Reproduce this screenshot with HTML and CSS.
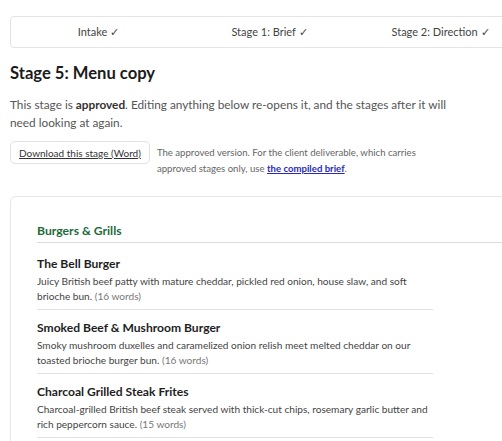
FILE: index.html
```html
<!DOCTYPE html>
<html lang="en">
<head>
<meta charset="utf-8">
<title>Stage 5: Menu copy</title>
<link rel="stylesheet" href="styles.css">
</head>
<body>
<div class="page">
  <nav class="stages">
    <div class="stage">Intake ✓</div>
    <div class="stage">Stage 1: Brief ✓</div>
    <div class="stage">Stage 2: Direction ✓</div>
    <div class="stage">Stage 3: Concept ✓</div>
  </nav>

  <h1 class="title">Stage 5: Menu copy</h1>
  <p class="status">This stage is <strong>approved</strong>. Editing anything below re-opens it, and the stages after it will need looking at again.</p>

  <div class="download">
    <button class="btn" type="button">Download this stage (Word)</button>
    <p class="note">The approved version. For the client deliverable, which carries approved stages only, use <a href="#">the compiled brief</a>.</p>
  </div>

  <section class="card">
    <h2 class="section-title">Burgers &amp; Grills</h2>
    <ul class="items">
      <li class="item">
        <h3 class="item-name">The Bell Burger</h3>
        <p class="item-desc">Juicy British beef patty with mature cheddar, pickled red onion, house slaw, and soft brioche bun. <span class="count">(16 words)</span></p>
      </li>
      <li class="item">
        <h3 class="item-name">Smoked Beef &amp; Mushroom Burger</h3>
        <p class="item-desc">Smoky mushroom duxelles and caramelized onion relish meet melted cheddar on our toasted brioche burger bun. <span class="count">(16 words)</span></p>
      </li>
      <li class="item">
        <h3 class="item-name">Charcoal Grilled Steak Frites</h3>
        <p class="item-desc">Charcoal-grilled British beef steak served with thick-cut chips, rosemary garlic butter and rich peppercorn sauce. <span class="count">(15 words)</span></p>
      </li>
    </ul>
  </section>
</div>
</body>
</html>
```

FILE: styles.css
```css
html, body {
  margin: 0;
  padding: 0;
  overflow: hidden;
  background: #fff;
}
body {
  font-family: Lato, "Noto Sans", sans-serif;
  color: #222;
}
.page {
  width: 760px;
  padding: 16px 10px;
}
.stages {
  display: grid;
  grid-template-columns: repeat(4, 171px);
  border: 1px solid #e4e4e4;
  border-radius: 4px;
  height: 30px;
  align-items: center;
}
.stage {
  text-align: center;
  font-size: 11px;
  color: #444;
  padding-left: 4px;
}
.title {
  font-size: 16.6px;
  font-weight: 700;
  margin: 14px 0 0;
  line-height: 22px;
  color: #1b1b1b;
}
.status {
  font-size: 11.8px;
  line-height: 18px;
  color: #555;
  margin: 12px 0 0;
  max-width: 445px;
}
.status strong {
  color: #333;
}
.download {
  display: flex;
  align-items: flex-start;
  gap: 7px;
  margin-top: 9px;
}
.btn {
  font-family: inherit;
  font-size: 10px;
  color: #333;
  text-decoration: underline;
  background: #fff;
  border: 1px solid #e2e2e2;
  border-radius: 5px;
  padding: 0 8px;
  height: 23px;
  flex: none;
}
.note {
  margin: 4px 0 0;
  font-size: 9.6px;
  line-height: 16px;
  color: #666;
  max-width: 288px;
}
.note a {
  color: #2a2ab8;
  font-weight: 700;
}
.card {
  margin-top: 19px;
  border: 1px solid #e6e6e6;
  border-radius: 6px;
  padding: 26px 26px 24px;
}
.section-title {
  font-size: 12.2px;
  line-height: 16px;
  font-weight: 700;
  color: #1d6b3b;
  margin: 0;
  padding-bottom: 3px;
  border-bottom: 1px solid #dcdcdc;
}
.items {
  list-style: none;
  margin: 3px 0 0;
  padding: 0;
  max-width: 396px;
}
.item {
  padding: 9px 0 5px;
  border-bottom: 1px solid #e2e2e2;
}
.item-name {
  font-size: 12.1px;
  font-weight: 700;
  margin: 0;
  line-height: 18px;
  color: #1e1e1e;
}
.item-desc {
  font-size: 10.1px;
  line-height: 15px;
  color: #444;
  margin: 1px 0 0;
}
.count {
  color: #777;
}
```
